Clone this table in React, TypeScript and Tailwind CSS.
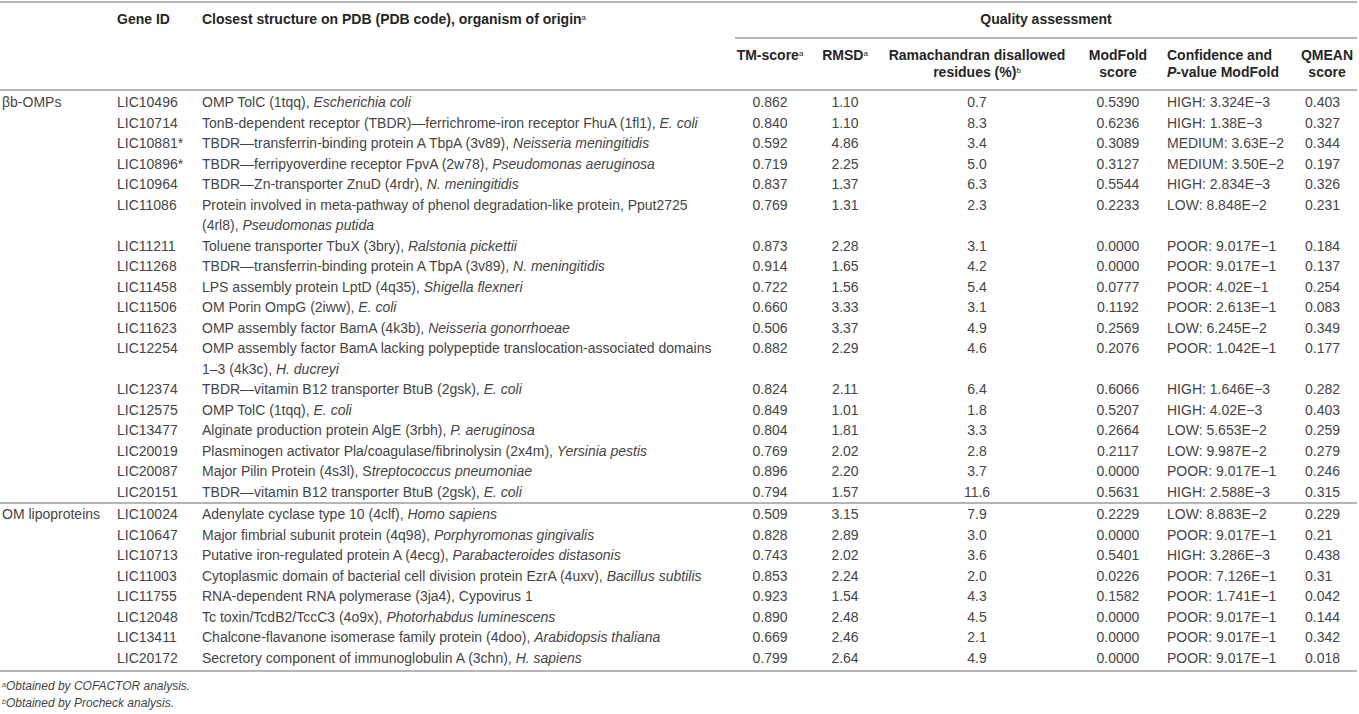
import React from "react"

type Row = {
  gene: string
  struct: React.ReactNode
  tm: string
  rmsd: string
  rama: string
  mf: string
  conf: string
  q: string
}

const omps: Row[] = [
  { gene: "LIC10496", struct: <>OMP TolC (1tqq), <i>Escherichia coli</i></>, tm: "0.862", rmsd: "1.10", rama: "0.7", mf: "0.5390", conf: "HIGH: 3.324E−3", q: "0.403" },
  { gene: "LIC10714", struct: <>TonB-dependent receptor (TBDR)—ferrichrome-iron receptor FhuA (1fl1), <i>E. coli</i></>, tm: "0.840", rmsd: "1.10", rama: "8.3", mf: "0.6236", conf: "HIGH: 1.38E−3", q: "0.327" },
  { gene: "LIC10881*", struct: <>TBDR—transferrin-binding protein A TbpA (3v89), <i>Neisseria meningitidis</i></>, tm: "0.592", rmsd: "4.86", rama: "3.4", mf: "0.3089", conf: "MEDIUM: 3.63E−2", q: "0.344" },
  { gene: "LIC10896*", struct: <>TBDR—ferripyoverdine receptor FpvA (2w78), <i>Pseudomonas aeruginosa</i></>, tm: "0.719", rmsd: "2.25", rama: "5.0", mf: "0.3127", conf: "MEDIUM: 3.50E−2", q: "0.197" },
  { gene: "LIC10964", struct: <>TBDR—Zn-transporter ZnuD (4rdr), <i>N. meningitidis</i></>, tm: "0.837", rmsd: "1.37", rama: "6.3", mf: "0.5544", conf: "HIGH: 2.834E−3", q: "0.326" },
  { gene: "LIC11086", struct: <>Protein involved in meta-pathway of phenol degradation-like protein, Pput2725<br />(4rl8), <i>Pseudomonas putida</i></>, tm: "0.769", rmsd: "1.31", rama: "2.3", mf: "0.2233", conf: "LOW: 8.848E−2", q: "0.231" },
  { gene: "LIC11211", struct: <>Toluene transporter TbuX (3bry), <i>Ralstonia pickettii</i></>, tm: "0.873", rmsd: "2.28", rama: "3.1", mf: "0.0000", conf: "POOR: 9.017E−1", q: "0.184" },
  { gene: "LIC11268", struct: <>TBDR—transferrin-binding protein A TbpA (3v89), <i>N. meningitidis</i></>, tm: "0.914", rmsd: "1.65", rama: "4.2", mf: "0.0000", conf: "POOR: 9.017E−1", q: "0.137" },
  { gene: "LIC11458", struct: <>LPS assembly protein LptD (4q35), <i>Shigella flexneri</i></>, tm: "0.722", rmsd: "1.56", rama: "5.4", mf: "0.0777", conf: "POOR: 4.02E−1", q: "0.254" },
  { gene: "LIC11506", struct: <>OM Porin OmpG (2iww), <i>E. coli</i></>, tm: "0.660", rmsd: "3.33", rama: "3.1", mf: "0.1192", conf: "POOR: 2.613E−1", q: "0.083" },
  { gene: "LIC11623", struct: <>OMP assembly factor BamA (4k3b), <i>Neisseria gonorrhoeae</i></>, tm: "0.506", rmsd: "3.37", rama: "4.9", mf: "0.2569", conf: "LOW: 6.245E−2", q: "0.349" },
  { gene: "LIC12254", struct: <>OMP assembly factor BamA lacking polypeptide translocation-associated domains<br />1–3 (4k3c), <i>H. ducreyi</i></>, tm: "0.882", rmsd: "2.29", rama: "4.6", mf: "0.2076", conf: "POOR: 1.042E−1", q: "0.177" },
  { gene: "LIC12374", struct: <>TBDR—vitamin B12 transporter BtuB (2gsk), <i>E. coli</i></>, tm: "0.824", rmsd: "2.11", rama: "6.4", mf: "0.6066", conf: "HIGH: 1.646E−3", q: "0.282" },
  { gene: "LIC12575", struct: <>OMP TolC (1tqq), <i>E. coli</i></>, tm: "0.849", rmsd: "1.01", rama: "1.8", mf: "0.5207", conf: "HIGH: 4.02E−3", q: "0.403" },
  { gene: "LIC13477", struct: <>Alginate production protein AlgE (3rbh), <i>P. aeruginosa</i></>, tm: "0.804", rmsd: "1.81", rama: "3.3", mf: "0.2664", conf: "LOW: 5.653E−2", q: "0.259" },
  { gene: "LIC20019", struct: <>Plasminogen activator Pla/coagulase/fibrinolysin (2x4m), <i>Yersinia pestis</i></>, tm: "0.769", rmsd: "2.02", rama: "2.8", mf: "0.2117", conf: "LOW: 9.987E−2", q: "0.279" },
  { gene: "LIC20087", struct: <>Major Pilin Protein (4s3l), S<i>treptococcus pneumoniae</i></>, tm: "0.896", rmsd: "2.20", rama: "3.7", mf: "0.0000", conf: "POOR: 9.017E−1", q: "0.246" },
  { gene: "LIC20151", struct: <>TBDR—vitamin B12 transporter BtuB (2gsk), <i>E. coli</i></>, tm: "0.794", rmsd: "1.57", rama: "11.6", mf: "0.5631", conf: "HIGH: 2.588E−3", q: "0.315" },
]

const lipo: Row[] = [
  { gene: "LIC10024", struct: <>Adenylate cyclase type 10 (4clf), <i>Homo sapiens</i></>, tm: "0.509", rmsd: "3.15", rama: "7.9", mf: "0.2229", conf: "LOW: 8.883E−2", q: "0.229" },
  { gene: "LIC10647", struct: <>Major fimbrial subunit protein (4q98), <i>Porphyromonas gingivalis</i></>, tm: "0.828", rmsd: "2.89", rama: "3.0", mf: "0.0000", conf: "POOR: 9.017E−1", q: "0.21" },
  { gene: "LIC10713", struct: <>Putative iron-regulated protein A (4ecg), <i>Parabacteroides distasonis</i></>, tm: "0.743", rmsd: "2.02", rama: "3.6", mf: "0.5401", conf: "HIGH: 3.286E−3", q: "0.438" },
  { gene: "LIC11003", struct: <>Cytoplasmic domain of bacterial cell division protein EzrA (4uxv), <i>Bacillus subtilis</i></>, tm: "0.853", rmsd: "2.24", rama: "2.0", mf: "0.0226", conf: "POOR: 7.126E−1", q: "0.31" },
  { gene: "LIC11755", struct: <>RNA-dependent RNA polymerase (3ja4), Cypovirus 1</>, tm: "0.923", rmsd: "1.54", rama: "4.3", mf: "0.1582", conf: "POOR: 1.741E−1", q: "0.042" },
  { gene: "LIC12048", struct: <>Tc toxin/TcdB2/TccC3 (4o9x), <i>Photorhabdus luminescens</i></>, tm: "0.890", rmsd: "2.48", rama: "4.5", mf: "0.0000", conf: "POOR: 9.017E−1", q: "0.144" },
  { gene: "LIC13411", struct: <>Chalcone-flavanone isomerase family protein (4doo), <i>Arabidopsis thaliana</i></>, tm: "0.669", rmsd: "2.46", rama: "2.1", mf: "0.0000", conf: "POOR: 9.017E−1", q: "0.342" },
  { gene: "LIC20172", struct: <>Secretory component of immunoglobulin A (3chn), <i>H. sapiens</i></>, tm: "0.799", rmsd: "2.64", rama: "4.9", mf: "0.0000", conf: "POOR: 9.017E−1", q: "0.018" },
]

function Section({ label, rows, head, tail }: { label: string; rows: Row[]; head: string; tail: string }) {
  return (
    <>
      {rows.map((r, i) => {
        const first = i === 0
        const last = i === rows.length - 1
        const pad = `${first ? head : ""} ${last ? tail : ""}`
        const td = `p-0 align-top leading-[20.5px] whitespace-nowrap ${pad}`
        return (
          <tr key={r.gene} className={last ? "border-b-2 border-[#b5b5b5]" : ""}>
            <td className={`${td} pl-[2px]`}>{first ? label : ""}</td>
            <td className={`${td} pl-[5px]`}>{r.gene}</td>
            <td className={`${td} pl-[5px]`}>{r.struct}</td>
            <td className={`${td} text-center`}>{r.tm}</td>
            <td className={`${td} text-center`}>{r.rmsd}</td>
            <td className={`${td} text-center`}>{r.rama}</td>
            <td className={`${td} text-center`}>{r.mf}</td>
            <td className={`${td} pl-[7px]`}>{r.conf}</td>
            <td className={`${td} pl-[8px]`}>{r.q}</td>
          </tr>
        )
      })}
    </>
  )
}

export default function App() {
  const th1 = "p-0 align-top font-bold leading-[17px] pt-[8px] pb-[9px] whitespace-nowrap"
  const th2 = "p-0 align-top font-bold leading-[17px] py-[8px] whitespace-nowrap"
  return (
    <div className="w-[1359px] h-[714px] bg-white pt-[1px] overflow-hidden font-['Liberation_Sans',Arial,sans-serif] text-[14px] text-[#454545]">
      <table className="w-[1357px] table-fixed border-collapse border-t-2 border-[#b5b5b5]">
        <colgroup>
          <col className="w-[112px]" />
          <col className="w-[85px]" />
          <col className="w-[531px]" />
          <col className="w-[84px]" />
          <col className="w-[66px]" />
          <col className="w-[198px]" />
          <col className="w-[84px]" />
          <col className="w-[137px]" />
          <col className="w-[60px]" />
        </colgroup>
        <thead className="text-[#262626]">
          <tr>
            <th className={th1}></th>
            <th className={`${th1} text-left pl-[5px]`}>Gene ID</th>
            <th className={`${th1} text-left pl-[5px]`}>
              Closest structure on PDB (PDB code), organism of origin<sup className="text-[8px] font-normal">a</sup>
            </th>
            <th colSpan={6} className="p-0 align-top font-bold whitespace-nowrap">
              <div className="ml-[7px] border-b-2 border-[#b5b5b5] pt-[8px] pb-[9px] text-center leading-[17px]">
                Quality assessment
              </div>
            </th>
          </tr>
          <tr className="border-b-2 border-[#b5b5b5]">
            <th className={th2}></th>
            <th className={th2}></th>
            <th className={th2}></th>
            <th className={`${th2} text-center`}>
              TM-score<sup className="text-[8px] font-normal">a</sup>
            </th>
            <th className={`${th2} text-center`}>
              RMSD<sup className="text-[8px] font-normal">a</sup>
            </th>
            <th className={`${th2} text-center`}>
              Ramachandran disallowed
              <br />
              residues (%)<sup className="text-[8px] font-normal">b</sup>
            </th>
            <th className={`${th2} text-center`}>
              ModFold
              <br />
              score
            </th>
            <th className={`${th2} text-left pl-[7px]`}>
              Confidence and
              <br />
              <i>P</i>-value ModFold
            </th>
            <th className={`${th2} text-center`}>
              QMEAN
              <br />
              score
            </th>
          </tr>
        </thead>
        <tbody>
          <Section label="βb-OMPs" rows={omps} head="pt-[1px]" tail="" />
          <Section label="OM lipoproteins" rows={lipo} head="" tail="pb-[2px]" />
        </tbody>
      </table>
      <div className="pl-[2px] pt-[6px] text-[12px] italic leading-[17px] text-[#454545]">
        <p>
          <sup className="text-[7px]">a</sup>Obtained by COFACTOR analysis.
        </p>
        <p>
          <sup className="text-[7px]">b</sup>Obtained by Procheck analysis.
        </p>
      </div>
    </div>
  )
}
